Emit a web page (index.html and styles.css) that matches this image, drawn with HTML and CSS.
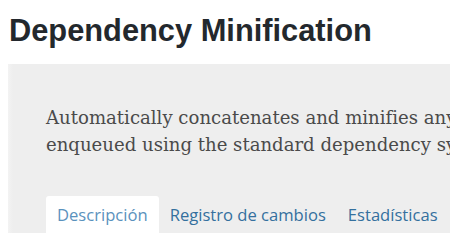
FILE: index.html
```html
<!DOCTYPE html>
<html lang="es">
<head>
  <meta charset="UTF-8" />
  <title>Dependency Minification</title>
  <link rel="stylesheet" href="styles.css">
</head>
<body>
  <div class="plugin">
    <h1>Dependency Minification</h1>
    <div class="banner">
      <p>Automatically concatenates and minifies any JavaScript and CSS<br>enqueued using the standard dependency system.</p>
      <ul class="tabs">
        <li class="active">Descripción</li>
        <li>Registro de cambios</li>
        <li>Estadísticas</li>
      </ul>
    </div>
  </div>
</body>
</html>
```

FILE: styles.css
```css
body {
  margin: 0;
  background: #fff;
  overflow: hidden;
}
.plugin {
  padding: 0 0 0 8px;
}
h1 {
  margin: 0;
  padding: 14px 0 0 1px;
  height: 50px;
  box-sizing: border-box;
  font-family: "Liberation Sans", Arial, sans-serif;
  font-size: 30.8px;
  font-weight: 700;
  color: #23282d;
  line-height: 34px;
  white-space: nowrap;
}
.banner {
  margin-top: 14px;
  background: linear-gradient(to right, #f3f3f3 0, #eeeeee 5px);
  padding: 40px 0 0 38px;
  overflow: hidden;
}
.banner p {
  margin: 0;
  font-family: "DejaVu Serif", Georgia, serif;
  font-size: 18.1px;
  line-height: 27px;
  color: #4a4a4a;
  white-space: nowrap;
}
.tabs {
  list-style: none;
  margin: 38px 0 0;
  padding: 0;
  display: flex;
  font-family: "Open Sans", sans-serif;
  font-size: 16.6px;
  white-space: nowrap;
}
.tabs li {
  padding: 7px 11px;
  line-height: 23px;
  color: #34709e;
}
.tabs li.active {
  background: #fff;
  color: #5a92bd;
  border-radius: 3px 3px 0 0;
}
```
